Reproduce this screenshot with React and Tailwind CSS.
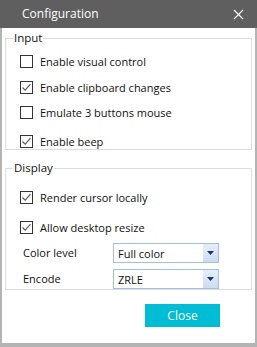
import { X } from 'lucide-react'

const FONT = { fontFamily: '"Open Sans", "Noto Sans", sans-serif' }

function Check({ checked, label, className = '' }) {
  return (
    <div className={`flex items-center h-[13px] pl-[14px] ${className}`}>
      <span className="w-[13px] h-[13px] border border-[#333333] bg-white flex items-center justify-center flex-shrink-0">
        {checked && (
          <svg width="11" height="11" viewBox="0 0 11 11">
            <path d="M1.5 5.5 L4.2 8.2 L9.5 2.2" fill="none" stroke="#5c5c5c" strokeWidth="1.2" />
          </svg>
        )}
      </span>
      <span className="ml-[7px] text-[11px] text-[#111111] leading-none">{label}</span>
    </div>
  )
}

function Select({ label, value, className = '' }) {
  return (
    <div className={`flex items-center ${className}`}>
      <span className="w-[107px] pl-[17px] text-[11px] text-[#111111]">{label}</span>
      <div className="w-[106px] h-[20px] border border-[#a3bde3] bg-white flex items-center">
        <span className="flex-1 pl-[4px] text-[11px] text-[#111111] leading-none">{value}</span>
        <span className="w-[15px] h-[18px] bg-gradient-to-b from-[#e6eefa] to-[#cddcf2] flex items-center justify-center">
          <svg width="7" height="4" viewBox="0 0 7 4">
            <path d="M0 0 H7 L3.5 4 Z" fill="#1d3461" />
          </svg>
        </span>
      </div>
    </div>
  )
}

function Group({ title, children, className = '' }) {
  return (
    <fieldset className={`mx-[3px] border border-[#dcdcdc] ${className}`}>
      <legend className="ml-[7px] px-[1px] text-[11.5px] leading-[16px] text-[#111111]">{title}</legend>
      {children}
    </fieldset>
  )
}

export default function App() {
  return (
    <div className="w-[257px] h-[347px] flex flex-col bg-white" style={FONT}>
      {/* Title bar */}
      <div className="h-[28px] flex-shrink-0 bg-[#5f5f5f] flex items-center justify-between pl-[22px] pr-[10px]">
        <span className="text-white text-[12px]">Configuration</span>
        <X size={17} strokeWidth={1.6} className="text-white" />
      </div>

      {/* Body */}
      <div className="flex-1 flex flex-col border-l-2 border-r-2 border-b-4 border-[#b4b4b4]">
        <Group title="Input" className="mt-[2px] pb-[1px]">
          <Check label="Enable visual control" className="mt-[9px]" />
          <Check checked label="Enable clipboard changes" className="mt-[13px]" />
          <Check label="Emulate 3 buttons mouse" className="mt-[12px]" />
          <Check checked label="Enable beep" className="mt-[16px]" />
        </Group>

        <Group title="Display" className="mt-[10px]">
          <Check checked label="Render cursor locally" className="mt-[15px]" />
          <Check checked label="Allow desktop resize" className="mt-[17px]" />
          <Select label="Color level" value="Full color" className="mt-[9px]" />
          <Select label="Encode" value="ZRLE" className="mt-[6px]" />
        </Group>

        <div className="flex justify-end pr-[35px] mt-[14px]">
          <button className="w-[75px] h-[23px] bg-[#00bcd4] text-white text-[12px] leading-none">
            Close
          </button>
        </div>
      </div>
    </div>
  )
}
